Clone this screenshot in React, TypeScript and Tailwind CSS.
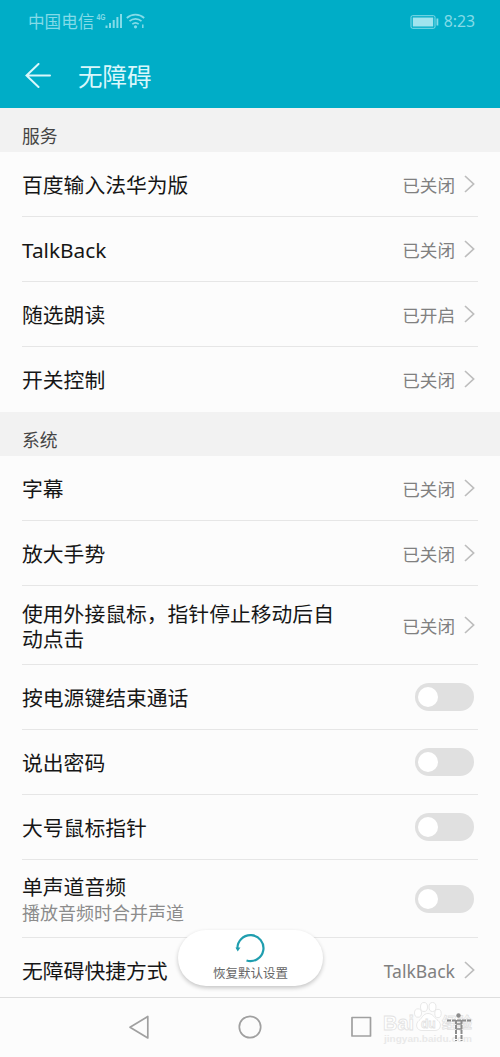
import { ReactNode, useState } from 'react';

interface RowProps {
  title: string;
  subtitle?: string;
  className?: string;
  titleClassName?: string;
  last?: boolean;
  children: ReactNode;
}

function Row({ title, subtitle, className = 'h-[65px]', titleClassName = 'pt-[2px]', last = false, children }: RowProps) {
  return (
    <div className={`mx-[22px] flex items-center justify-between ${last ? '' : 'border-b border-[#e6e6e6]'} ${className}`}>
      <div className={`max-w-[318px] text-[20.8px] leading-[25px] text-[#161616] ${titleClassName}`}>
        <div>{title}</div>
        {subtitle && <div className="text-[18px] leading-[27px] text-[#8c8c8c]">{subtitle}</div>}
      </div>
      {children}
    </div>
  );
}

function Value({ text }: { text: string }) {
  return (
    <div className="flex items-center pt-[1px] text-[17.6px] leading-6 text-[#808080]">
      {text}
      <svg className="ml-[9px] mr-[3px] mb-[2px] h-5 w-[11px]" viewBox="0 0 11 20" fill="none" stroke="#bdbdbd" strokeWidth="1.7">
        <path d="M1 2l8.6 8L1 18" />
      </svg>
    </div>
  );
}

function Toggle() {
  const [on, setOn] = useState(false);

  return (
    <button
      onClick={() => setOn(!on)}
      className={`mr-1 flex h-7 w-[59px] items-center rounded-full px-[3px] ${on ? 'justify-end bg-[#00adc7]' : 'bg-[#e0e0e0]'}`}
    >
      <span className="h-5 w-5 rounded-full bg-white" />
    </button>
  );
}

function SectionTitle({ children }: { children: ReactNode }) {
  return (
    <div className="h-11 bg-[#f2f2f2] px-[22px] pt-[15px] text-[17.8px] leading-[26px] text-[#454545]">{children}</div>
  );
}

function StatusBar() {
  return (
    <div className="flex h-[43px] items-center justify-between pl-[28px] pr-[25px] text-[16.6px] text-[#84dbe8]">
      <div className="flex items-center">
        <span className="pt-[2px]">中国电信</span>
        <svg className="ml-[2px] h-[26px] w-[54px]" viewBox="0 -4 54 26" fill="none" stroke="currentColor">
          <text className="font-['Liberation_Sans',sans-serif]" x="0.5" y="7.500" fontSize="9" fontWeight="700" fill="currentColor" stroke="none" textLength="9" lengthAdjust="spacingAndGlyphs">4G</text>
          <path d="M10.5 13.5v2.500M14 11v5M17.7 8v8M21.4 5v11M25 2v14" strokeWidth="2" />
          <path d="M30.800 6a13 13 0 0 1 17.400 0M33.500 9.200a9 9 0 0 1 12 0M36.300 12.200a5 5 0 0 1 6.400 0" strokeWidth="1.7" />
          <circle cx="39.5" cy="14.8" r="1.6" fill="currentColor" stroke="none" />
          <path d="M46.800 12.500v3.500" strokeWidth="1.5" />
        </svg>
      </div>
      <div className="flex items-center gap-[5px]">
        <svg className="h-[14px] w-[29px]" viewBox="0 0 29 14">
          <rect x="1" y="0.7" width="24" height="12.6" rx="1.5" fill="none" stroke="currentColor" />
          <rect x="2.8" y="2.5" width="20.4" height="9" fill="#a0e4ee" />
          <path d="M26.500 3.500h1.800v7h-1.800z" fill="currentColor" />
        </svg>
        <span className="pt-[1px] text-[15.8px]">8:23</span>
      </div>
    </div>
  );
}

function NavBar() {
  return (
    <div className="relative h-[60px] border-t border-[#dedede]">
      <svg className="h-[59px] w-full" viewBox="0 0 500 59" fill="none" stroke="#a0a0a0" strokeWidth="1.7" strokeLinejoin="round">
        <path d="M147.800 18.500v21.500L130 29.200z" />
        <circle cx="250" cy="29" r="10.7" />
        <rect x="352" y="19.5" width="18.5" height="18.5" />
      </svg>
      <Watermark />
    </div>
  );
}

function Watermark() {
  return (
    <svg className="absolute left-[380px] top-0 h-[59px] w-[100px]" viewBox="0 0 100 59" fill="none">
      <g fill="#fff" stroke="#e2e2e2" strokeWidth="0.8">
        <ellipse cx="38" cy="15" rx="3.5" ry="4.2" />
        <ellipse cx="44" cy="9" rx="3.5" ry="4.5" />
        <ellipse cx="52.5" cy="9" rx="3.5" ry="4.5" />
        <ellipse cx="58" cy="15.5" rx="3.2" ry="4.2" />
        <path d="M48 15.500c-5 0-6 5-9 7-4 3-3 10 3 10h13c6 0 7-7 3-10-3-2-5-7-10-7z" />
        <text className="font-['Liberation_Sans',sans-serif]" x="3" y="32" fontSize="21" fontWeight="700" textLength="31" lengthAdjust="spacingAndGlyphs">Bai</text>
        <text className="font-['Liberation_Sans',sans-serif]" x="41" y="30" fontSize="12" fontWeight="700">du</text>
        <text x="62" y="30" fontSize="15" fontWeight="700">经验</text>
      </g>
      <text className="font-['Liberation_Sans',sans-serif]" x="4" y="43.5" fontSize="9.5" fontWeight="700" fill="#e9e9e9" textLength="88" lengthAdjust="spacingAndGlyphs">jingyan.baidu.com</text>
      {/* accessibility figure */}
      <g stroke="#8c8c8c">
        <circle cx="78.5" cy="17.5" r="2.2" fill="#8c8c8c" stroke="none" />
        <path d="M67 22.500h24" strokeWidth="1.8" strokeDasharray="4 1" />
        <path d="M76 22v21M81.500 22v21" strokeWidth="2" strokeDasharray="4 1" />
        <path d="M76 26h6M76 31h6" strokeWidth="1.5" />
      </g>
    </svg>
  );
}

export default function App() {
  return (
    <div className="relative flex h-[1057px] w-[500px] flex-col overflow-hidden bg-[#fcfcfc] font-['Noto_Sans','Noto_Sans_CJK_SC',sans-serif]">
      <header className="h-[108px] bg-[#00adc7]">
        <StatusBar />
        <div className="flex h-[65px] items-center pl-[25px] text-[24.5px] text-[#d9f7fb]">
          <svg className="mr-[27px] h-[26px] w-[26px]" viewBox="0 0 26 26" fill="none" stroke="currentColor" strokeWidth="2" strokeLinecap="round">
            <path d="M13.500 1L1.500 12.500l12 11.500M1.500 12.500H25" />
          </svg>
          <h1 className="pt-[3px]">无障碍</h1>
        </div>
      </header>

      <SectionTitle>服务</SectionTitle>
      <Row title="百度输入法华为版"><Value text="已关闭" /></Row>
      <Row title="TalkBack"><Value text="已关闭" /></Row>
      <Row title="随选朗读"><Value text="已开启" /></Row>
      <Row title="开关控制" last><Value text="已关闭" /></Row>

      <SectionTitle>系统</SectionTitle>
      <Row title="字幕"><Value text="已关闭" /></Row>
      <Row title="放大手势"><Value text="已关闭" /></Row>
      <Row title="使用外接鼠标，指针停止移动后自动点击" className="h-[79px]" titleClassName="pt-[3px]"><Value text="已关闭" /></Row>
      <Row title="按电源键结束通话"><Toggle /></Row>
      <Row title="说出密码"><Toggle /></Row>
      <Row title="大号鼠标指针"><Toggle /></Row>
      <Row title="单声道音频" subtitle="播放音频时合并声道" className="h-[78px]" titleClassName="pt-[5px]"><Toggle /></Row>
      <Row title="无障碍快捷方式" className="h-[59px]" titleClassName="pt-[8px]" last>
        <div className="pt-[5px]"><Value text="TalkBack" /></div>
      </Row>
      <NavBar />

      {/* Floating reset button */}
      <button className="absolute left-[178px] top-[930px] flex h-14 w-[145px] flex-col items-center rounded-full bg-white pt-[2px] text-[12.5px] leading-[18px] text-[#666] shadow-[0_2px_4px_rgba(0,0,0,0.22)]">
        <svg className="mb-[1px] mr-[2px] h-8 w-8" viewBox="0 0 32 32" fill="none">
          <path d="M3.500 17A13 13 0 1 1 12.500 28.500" stroke="#209eaf" strokeWidth="2.2" />
          <path d="M1.500 15.500h5l-2.800 4z" fill="#209eaf" />
        </svg>
        <span>恢复默认设置</span>
      </button>
    </div>
  );
}
